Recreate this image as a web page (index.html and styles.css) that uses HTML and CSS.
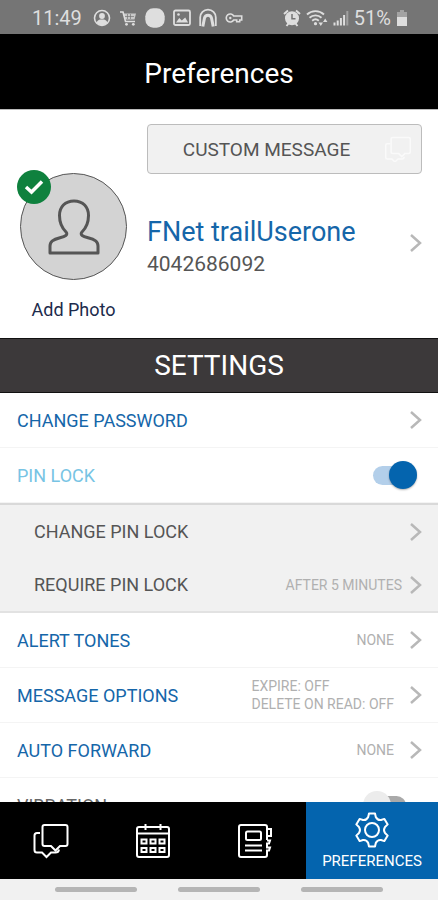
FILE: index.html
```
<!DOCTYPE html>
<html lang="en">
<head>
  <meta charset="UTF-8">
  <meta name="viewport" content="width=device-width, initial-scale=1.0">
  <title>Preferences</title>
  <link rel="stylesheet" href="styles.css">
</head>
<body>

  <div class="status-bar">
    <span class="time">11:49</span>
    <div class="status-icons">
      <svg width="18" height="18" viewBox="0 0 18 18">
        <circle cx="9" cy="9" r="7.5" fill="none" stroke="currentColor" stroke-width="1.6"/>
        <circle cx="9" cy="7" r="2.9" fill="currentColor"/>
        <path d="M3.5 13.2C5 10.7 7 10.6 9 10.6s4 .1 5.500 2.600C13 15.500 11 16.300 9 16.300s-4-.8-5.500-3.100z" fill="currentColor"/>
      </svg>
      <svg width="18" height="18" viewBox="0 0 18 18">
        <path d="M1 3h3l2.500 9.500H16" fill="none" stroke="currentColor" stroke-width="1.6"/>
        <path d="M4.500 4.500H17l-1.500 6H6z" fill="currentColor" opacity=".8"/>
        <path d="M6 7.500h9M8.500 5v5M11.500 5v5" stroke="#757575" stroke-width=".7"/>
        <circle cx="7.500" cy="15.300" r="1.400" fill="currentColor"/>
        <circle cx="14.300" cy="15.300" r="1.400" fill="currentColor"/>
      </svg>
      <svg width="20" height="20" viewBox="0 0 20 20">
        <rect x=".3" y=".3" width="19.400" height="19.400" rx="8" fill="currentColor"/>
      </svg>
      <svg width="18" height="18" viewBox="0 0 18 18">
        <rect x="1" y="1.500" width="16" height="14.500" rx="1.500" fill="none" stroke="currentColor" stroke-width="1.800"/>
        <path d="M3 13.500l3.300-4.500 2.500 2.500 3.400-3 2.900 5z" fill="currentColor"/>
        <circle cx="5.500" cy="5.500" r="1.300" fill="currentColor"/>
      </svg>
      <svg width="18" height="20" viewBox="0 0 18 20">
        <path d="M1.200 18V9.500a7.800 7.800 0 0 1 15.600 0V18" fill="none" stroke="currentColor" stroke-width="1.800"/>
        <path d="M3.800 18.500l1.700-8.500a3.600 3.600 0 0 1 7 0l1.700 8.500" fill="none" stroke="currentColor" stroke-width="3"/>
      </svg>
      <svg width="18" height="18" viewBox="0 0 18 18">
        <path d="M8.700 7A4 4 0 1 0 8.700 11h3v1.700h3V11h2V7z" fill="none" stroke="currentColor" stroke-width="1.600"/>
        <circle cx="5.300" cy="9" r="1.200" fill="currentColor"/>
      </svg>
    </div>
    <div class="status-right">
      <svg width="18" height="18" viewBox="0 0 18 18">
        <path d="M1 5l4-3.500M17 5l-4-3.500M3.500 17l2-2.500M14.500 17l-2-2.500" stroke="currentColor" stroke-width="2"/>
        <circle cx="9" cy="9.300" r="7" fill="currentColor"/>
        <path d="M9 5v4.800h3.500" fill="none" stroke="#757575" stroke-width="1.500"/>
      </svg>
      <svg width="22" height="18" viewBox="0 0 22 18">
        <path d="M1 5.500a12.500 12.500 0 0 1 17 0M3.500 8.700a9 9 0 0 1 12 0M6.200 11.700a5 5 0 0 1 6.600 0" fill="none" stroke="currentColor" stroke-width="1.900"/>
        <circle cx="9.500" cy="14.700" r="1.600" fill="currentColor"/>
        <path d="M12.500 13.500h4.500l-2.200 3.500zM17 13l2.200-3.500 2.200 3.500z" fill="currentColor"/>
      </svg>
      <svg width="16" height="18" viewBox="0 0 16 18">
        <path d="M1.500 16.500v-3M4.700 16.500v-5M7.900 16.500V9M11.100 16.500V6" stroke="currentColor" stroke-width="2"/>
        <path d="M14.300 16.500V2" stroke="#a0a0a0" stroke-width="2"/>
      </svg>
      <span>51%</span>
      <svg width="12" height="18" viewBox="0 0 12 18">
        <path d="M1 3h3V1h4v2h3v5H1z" fill="#a3a3a3"/>
        <path d="M1 8h10v9H1z" fill="currentColor"/>
      </svg>
    </div>
  </div>

  <header class="title-bar">
    <h1>Preferences</h1>
  </header>

  <main class="content">
    <section class="profile">
      <div class="photo">
        <button type="button" class="avatar" aria-label="Photo">
          <svg width="52" height="56" viewBox="0 0 52 56" fill="none" stroke="#555" stroke-width="3" stroke-linejoin="round">
            <path d="M26 2C17 2 11.500 8 11.500 16.500c0 7 2.500 12.500 6.500 16.500 2.500 3-1 4.300-6 5.700C5 40.500 2 42.500 2 47v7h48v-7c0-4.500-3-6.500-10-8.300-5-1.400-8.500-2.700-6-5.700 4-4 6.500-9.500 6.500-16.500C40.500 8 35 2 26 2z"/>
          </svg>
          <span class="badge">
            <svg width="20" height="16" viewBox="0 0 20 16">
              <path d="M2 8l5.500 5L18 2.500" fill="none" stroke="#fff" stroke-width="3.500"/>
            </svg>
          </span>
        </button>
        <a href="#photo" class="add-photo">Add Photo</a>
      </div>
      <div class="details">
        <button type="button" class="custom-message">
          <span>CUSTOM MESSAGE</span>
          <svg width="26" height="26" viewBox="0 0 34 34" fill="none" stroke="#fafafa" stroke-width="2">
            <path d="M10 2h21q2 0 2 2v17q0 2-2 2h-5l-4 4-4-4h-8q-2 0-2-2V4q0-2 2-2z"/>
            <path d="M7 10H3q-2 0-2 2v16q0 2 2 2h6l4 4 4-4h5q3 0 3-3"/>
          </svg>
        </button>
        <a href="#account" class="account">
          <span>
            <span class="name">FNet trailUserone</span>
            <span class="number">4042686092</span>
          </span>
          <svg class="chevron" viewBox="0 0 12 18"><path d="M1 1l9 8-9 8"/></svg>
        </a>
      </div>
    </section>

    <h2 class="section-title">SETTINGS</h2>

    <div class="settings">
      <a href="#password" class="row">
        <span class="label">CHANGE PASSWORD</span>
        <svg class="chevron" viewBox="0 0 12 18"><path d="M1 1l9 8-9 8"/></svg>
      </a>
      <div class="row">
        <label class="label light" for="pinLock">PIN LOCK</label>
        <input type="checkbox" class="switch" id="pinLock" checked>
      </div>
      <div class="sub-rows">
        <a href="#pin" class="row">
          <span class="label">CHANGE PIN LOCK</span>
          <svg class="chevron" viewBox="0 0 12 18"><path d="M1 1l9 8-9 8"/></svg>
        </a>
        <a href="#require-pin" class="row">
          <span class="label">REQUIRE PIN LOCK</span>
          <span class="value near">AFTER 5 MINUTES</span>
          <svg class="chevron" viewBox="0 0 12 18"><path d="M1 1l9 8-9 8"/></svg>
        </a>
      </div>
      <a href="#tones" class="row">
        <span class="label">ALERT TONES</span>
        <span class="value">NONE</span>
        <svg class="chevron" viewBox="0 0 12 18"><path d="M1 1l9 8-9 8"/></svg>
      </a>
      <a href="#messages" class="row">
        <span class="label">MESSAGE OPTIONS</span>
        <span class="value">EXPIRE: OFF<br>DELETE ON READ: OFF</span>
        <svg class="chevron" viewBox="0 0 12 18"><path d="M1 1l9 8-9 8"/></svg>
      </a>
      <a href="#forward" class="row">
        <span class="label">AUTO FORWARD</span>
        <span class="value">NONE</span>
        <svg class="chevron" viewBox="0 0 12 18"><path d="M1 1l9 8-9 8"/></svg>
      </a>
      <div class="row">
        <label class="label grey" for="vibration">VIBRATION</label>
        <input type="checkbox" class="switch" id="vibration">
      </div>
    </div>
  </main>

  <nav class="tabs">
    <a href="#inbox" class="tab" aria-label="Messages">
      <svg width="36" height="36" viewBox="0 0 36 36" fill="none" stroke="#fff" stroke-width="2">
        <path d="M11.500 2h21q2 0 2 2v17q0 2-2 2H27l-4.500 4.500L18 23h-6.500q-2 0-2-2V4q0-2 2-2z"/>
        <path d="M7 10H4q-2.500 0-2.500 2.500V27q0 2.500 2.500 2.500h5l4.500 4.500 4.500-4.500h4.500q3 0 3.500-3"/>
      </svg>
    </a>
    <a href="#calendar" class="tab" aria-label="Calendar">
      <svg width="36" height="36" viewBox="0 0 36 36" fill="none" stroke="#fff" stroke-width="2">
        <rect x="2" y="4" width="32" height="30" rx="2"/>
        <path d="M2 10.500h32M10.500 1v6M25.500 1v6"/>
        <path d="M6.500 16.500h5v4h-5zM15.500 16.500h5v4h-5zM24.500 16.500h5v4h-5zM6.500 25h5v4h-5zM15.500 25h5v4h-5zM24.500 25h5v4h-5z"/>
      </svg>
    </a>
    <a href="#contacts" class="tab" aria-label="Contacts">
      <svg width="36" height="36" viewBox="0 0 36 36" fill="none" stroke="#fff" stroke-width="2">
        <path d="M30 6V4q0-2-2-2H4Q2 2 2 4v28q0 2 2 2h24q2 0 2-2v-3"/>
        <path d="M30 6h4v7h-4zM30 13v4M30 17.500h3l-1 3h-2v4h3l-1 3h-2v3"/>
        <rect x="9" y="8.500" width="15" height="8.500" rx="1.500"/>
        <path d="M8 22.500h17M8 27.500h17"/>
      </svg>
    </a>
    <a href="#preferences" class="tab active">
      <svg width="36" height="36" viewBox="0 0 36 36" fill="none" stroke="#fff" stroke-width="2" stroke-linejoin="round">
        <path d="M15 1.500h6l.8 3.500Q23.500 8.500 27 8l3.400-1.100 3.300 5.500-2.700 2.600q-2 3 0 6l2.700 2.600-3.300 5.500L27 28q-3.500-.5-5.200 3l-.8 3.500h-6l-.8-3.500Q12.500 27.500 9 28l-3.400 1.100-3.300-5.500L5 21q2-3 0-6l-2.700-2.600 3.300-5.500L9 8q3.500.5 5.200-3z"/>
        <circle cx="18" cy="18" r="7"/>
      </svg>
      <span>PREFERENCES</span>
    </a>
  </nav>

  <div class="gesture-bar">
    <span></span>
    <span></span>
    <span></span>
  </div>

</body>
</html>
```
FILE: styles.css
```
* {
  box-sizing: border-box;
}

body {
  font-family: Roboto, 'Liberation Sans', sans-serif;
  background-color: #fff;
  margin: 0;
  height: 100vh;
  display: flex;
  flex-direction: column;
}

a {
  color: inherit;
  text-decoration: none;
}

h1, h2 {
  margin: 0;
  font-weight: 400;
}

button {
  font-family: inherit;
  padding: 0;
  cursor: pointer;
}

svg {
  flex: none;
}

.status-bar {
  display: flex;
  align-items: center;
  padding: 2px 30px 0 32px;
  height: 34px;
  flex: none;
  background-color: #757575;
  color: #dedede;
  font-size: 20px;
}

.status-icons {
  display: flex;
  align-items: center;
  gap: 8px;
  margin-left: 11px;
}

.status-right {
  display: flex;
  align-items: center;
  gap: 5px;
  margin-left: auto;
}

.title-bar {
  display: flex;
  align-items: center;
  justify-content: center;
  height: 76px;
  padding-top: 3px;
  flex: none;
  background-color: #000;
  border-bottom: 1px solid #bbb;
  color: #fff;
}

h1 {
  font-size: 28px;
}

.content {
  flex: 1;
  min-height: 0;
  overflow: hidden;
}

.profile {
  display: flex;
  gap: 20px;
  padding: 14px 16px 17px 20px;
}

.photo {
  display: flex;
  flex-direction: column;
  align-items: center;
  gap: 19px;
  padding-top: 49px;
}

.avatar {
  position: relative;
  display: flex;
  align-items: center;
  justify-content: center;
  width: 107px;
  height: 107px;
  border: 1px solid #555;
  border-radius: 50%;
  background-color: #d3d3d3;
}

.badge {
  position: absolute;
  top: -4px;
  left: -4px;
  display: flex;
  align-items: center;
  justify-content: center;
  width: 34px;
  height: 34px;
  border-radius: 50%;
  background-color: #0f813e;
}

.add-photo {
  color: #1d2b4c;
  font-size: 18px;
  line-height: 22px;
}

.details {
  flex: 1;
}

.custom-message {
  display: flex;
  align-items: center;
  width: 100%;
  height: 50px;
  padding-right: 10px;
  border: 1px solid #bcbcbc;
  border-radius: 4px;
  background-color: #f1f1f1;
  color: #555;
  font-size: 19px;
}

.custom-message span {
  flex: 1;
}

.account {
  display: flex;
  align-items: center;
  justify-content: space-between;
  margin-top: 37px;
}

.name, .number {
  display: block;
}

.name {
  color: #1566a9;
  font-size: 27px;
  line-height: 42px;
}

.number {
  color: #555;
  font-size: 21px;
  line-height: 22px;
}

.chevron {
  width: 12px;
  height: 18px;
  fill: none;
  stroke: #b8b8b8;
  stroke-width: 2.5;
}

.section-title {
  display: flex;
  align-items: center;
  justify-content: center;
  height: 55px;
  border-top: 1px solid #111;
  border-bottom: 1px solid #111;
  background-color: #3c393a;
  color: #fff;
  font-size: 28px;
}

.row {
  display: flex;
  align-items: center;
  height: 55px;
  padding: 0 16px 0 17px;
  border-bottom: 1px solid #f4f4f4;
}

.label {
  flex: 1;
  color: #1566a9;
  font-size: 18px;
}

.light {
  color: #78c4e4;
}

.grey {
  color: #666;
}

.sub-rows {
  background-color: #f1f1f1;
  border-top: 2px solid #d9d9d9;
  border-bottom: 2px solid #e2e2e2;
}

.sub-rows .row {
  height: 53px;
  padding-left: 34px;
  border-bottom: none;
}

.sub-rows .label {
  color: #555;
}

.value {
  margin-right: 16px;
  color: #b0b0b0;
  font-size: 14px;
  line-height: 18px;
}

.near {
  margin-right: 8px;
}

.switch {
  appearance: none;
  display: flex;
  align-items: center;
  width: 38px;
  height: 19px;
  margin: 0 16px 0 0;
  border-radius: 10px;
  background-color: #a9a9a9;
  cursor: pointer;
}

.switch::before {
  content: "";
  width: 28px;
  height: 28px;
  flex: none;
  margin-left: -5px;
  border-radius: 50%;
  background-color: #ececec;
}

.switch:checked {
  justify-content: flex-end;
  width: 44px;
  margin-right: 5px;
  background-color: #b3cfea;
}

.switch:checked::before {
  margin-left: 0;
  background-color: #0464ae;
  box-shadow: 0 1px 2px rgba(0, 0, 0, 0.3);
}

.tabs {
  display: grid;
  grid-template-columns: 102fr 102fr 102fr 132fr;
  height: 77px;
  flex: none;
  background-color: #000;
}

.tab {
  display: flex;
  flex-direction: column;
  align-items: center;
  justify-content: center;
  gap: 4px;
  color: #fff;
  font-size: 15px;
}

.active {
  background-color: #0464ae;
}

.gesture-bar {
  display: flex;
  align-items: center;
  justify-content: center;
  gap: 41px;
  height: 21px;
  flex: none;
  background-color: #f1f1f1;
}

.gesture-bar span {
  width: 82px;
  height: 5px;
  border-radius: 3px;
  background-color: #b5b5b5;
}
```
